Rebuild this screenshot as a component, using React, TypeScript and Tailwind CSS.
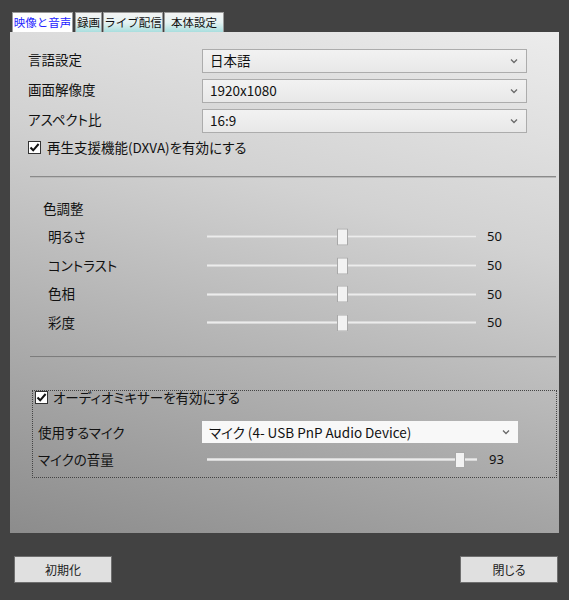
import React from "react";

const font = { fontFamily: '"Noto Sans CJK JP", "Noto Sans", sans-serif' };

function Chevron() {
  return (
    <svg width="8" height="6" viewBox="0 0 8 6" className="shrink-0">
      <path d="M1 1.5 L4 4.5 L7 1.5" fill="none" stroke="#6a6a6a" strokeWidth="1.3" />
    </svg>
  );
}

function Select({ value, w, white }: { value: string; w: string; white?: boolean }) {
  return (
    <div
      className={
        "flex items-center justify-between pl-[7px] pr-[8px] text-[13.5px] text-[#111] " +
        w +
        (white
          ? " h-[22px] bg-[#f8f8f8]"
          : " h-[24px] border border-[#acacac] bg-linear-to-b from-[#f2f2f2] to-[#e8e8e8]")
      }
    >
      <span className="leading-none">{value}</span>
      <Chevron />
    </div>
  );
}

function Checkbox() {
  return (
    <div className="w-[13px] h-[13px] border border-[#333] bg-white flex items-center justify-center shrink-0">
      <svg width="11" height="11" viewBox="0 0 11 11">
        <path d="M1.5 5.5 L4.2 8.3 L9.6 2" fill="none" stroke="#111" strokeWidth="2" />
      </svg>
    </div>
  );
}

function Slider({ pos, w, thumbW, thumbH }: { pos: number; w: number; thumbW: number; thumbH: number }) {
  return (
    <div className="relative h-[17px] flex items-center" style={{ width: w }}>
      <div className="w-full h-[3px] bg-[#ececec] border-y border-[#d8d8d8]" />
      <div
        className="absolute top-1/2 -translate-y-1/2 bg-[#f2f2f2] border border-[#a8a8a8]"
        style={{ left: pos, width: thumbW, height: thumbH }}
      />
    </div>
  );
}

function SliderRow({ label, value }: { label: string; value: string }) {
  return (
    <div className="flex items-center h-[28.7px]">
      <div className="w-[197px] pl-[38px] text-[13.5px] text-[#111] leading-none">{label}</div>
      <Slider pos={130} w={269} thumbW={11} thumbH={17} />
      <div className="ml-[11px] text-[13px] text-[#111] leading-none" style={{ fontFamily: '"Noto Sans", sans-serif' }}>
        {value}
      </div>
    </div>
  );
}

function Tab({ label, w, active }: { label: string; w: string; active?: boolean }) {
  return (
    <div
      className={
        "h-[20px] flex items-center justify-center text-[11.5px] leading-none border border-b-0 border-[#9a9a9a] [font-feature-settings:normal] " +
        w +
        (active ? " bg-white text-[#2424ff]" : " bg-linear-to-b from-[#f4f4f4] via-[#e4f2f2] to-[#a9dede] text-[#111]")
      }
    >
      {label}
    </div>
  );
}

export default function App() {
  return (
    <div className="w-[569px] h-[600px] bg-[#424242] flex flex-col [font-feature-settings:'palt']" style={font}>
      <div className="flex pt-[12px] pl-[12px] gap-[1px]">
        <Tab label="映像と音声" w="w-[61px]" active />
        <Tab label="録画" w="w-[27px] ml-[1px]" />
        <Tab label="ライブ配信" w="w-[60px]" />
        <Tab label="本体設定" w="w-[60px]" />
      </div>
      <div className="ml-[10px] w-[549px] h-[501px] bg-[linear-gradient(195deg,#ececec_0%,#d2d2d2_35%,#a6a6a6_75%,#8c8c8c_100%)] pt-[17px] flex flex-col">
        <div className="flex flex-col gap-[6px]">
          {[
            ["言語設定", "日本語"],
            ["画面解像度", "1920x1080"],
            ["アスペクト比", "16:9"],
          ].map(([l, v]) => (
            <div key={l} className="flex items-center h-[24px]">
              <div className="w-[192px] pl-[18px] text-[13.5px] text-[#111] leading-none -mt-[2px]">{l}</div>
              <Select value={v} w="w-[325px]" />
            </div>
          ))}
        </div>
        <div className="mt-[8px] pl-[18px] flex items-center gap-[6px] h-[13px]">
          <Checkbox />
          <span className="text-[13.5px] text-[#111] leading-none">再生支援機能(DXVA)を有効にする</span>
        </div>
        <div className="mt-[22px] ml-[20px] w-[526px] h-[2px] bg-[#8a8a8a] border-b border-[#b8b8b8]" />
        <div className="mt-[24px] pl-[33px] text-[13.5px] text-[#111] leading-none">色調整</div>
        <div className="mt-[7px] flex flex-col">
          <SliderRow label="明るさ" value="50" />
          <SliderRow label="コントラスト" value="50" />
          <SliderRow label="色相" value="50" />
          <SliderRow label="彩度" value="50" />
        </div>
        <div className="mt-[19px] ml-[20px] w-[526px] h-[2px] bg-[#7c7c7c] border-b border-[#a8a8a8]" />
        <div className="mt-[32px] ml-[22px] w-[525px] h-[88px] border border-dotted border-[#444] flex flex-col">
          <div className="flex items-center gap-[5px] pl-[2px] h-[13px]">
            <Checkbox />
            <span className="text-[13.5px] text-[#111] leading-none">オーディオミキサーを有効にする</span>
          </div>
          <div className="mt-[17px] flex items-center h-[22px]">
            <div className="w-[169px] pl-[5px] text-[13.5px] text-[#111] leading-none">使用するマイク</div>
            <Select value="マイク (4- USB PnP Audio Device)" w="w-[316px]" white />
          </div>
          <div className="mt-[8px] flex items-center h-[17px]">
            <div className="w-[174px] pl-[5px] text-[13.5px] text-[#111] leading-none">マイクの音量</div>
            <Slider pos={248} w={270} thumbW={10} thumbH={16} />
            <div className="ml-[12px] text-[13px] text-[#111] leading-none" style={{ fontFamily: '"Noto Sans", sans-serif' }}>
              93
            </div>
          </div>
        </div>
      </div>
      <div className="mt-[23px] flex justify-between pl-[14px] pr-[11px]">
        <div className="w-[98px] h-[27px] bg-[#e0e0e0] border border-[#6e6e6e] flex items-center justify-center text-[12px] text-[#222] leading-none">
          初期化
        </div>
        <div className="w-[98px] h-[27px] bg-[#e0e0e0] border border-[#6e6e6e] flex items-center justify-center text-[12px] text-[#222] leading-none">
          閉じる
        </div>
      </div>
    </div>
  );
}
